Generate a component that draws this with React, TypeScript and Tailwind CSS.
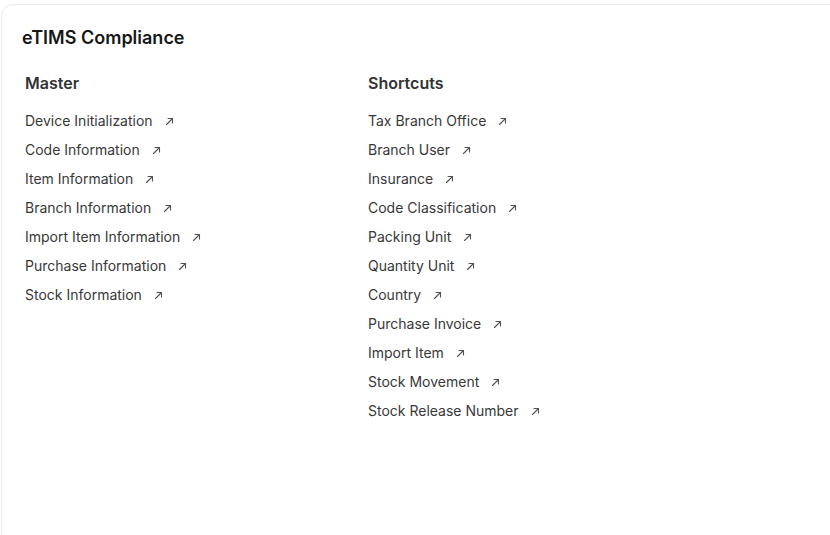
import React from 'react';

const master = [
  'Device Initialization',
  'Code Information',
  'Item Information',
  'Branch Information',
  'Import Item Information',
  'Purchase Information',
  'Stock Information',
];

const shortcuts = [
  'Tax Branch Office',
  'Branch User',
  'Insurance',
  'Code Classification',
  'Packing Unit',
  'Quantity Unit',
  'Country',
  'Purchase Invoice',
  'Import Item',
  'Stock Movement',
  'Stock Release Number',
];

function ArrowIcon() {
  return (
    <svg width="9" height="9" viewBox="0 0 9 9" fill="none" className="shrink-0">
      <path d="M1.5 7.5L7.5 1.5M3 1.5H7.5V6" stroke="#525252" strokeWidth="1.1" strokeLinecap="round" strokeLinejoin="round" />
    </svg>
  );
}

function Column({ title, items }: { title: string; items: string[] }) {
  return (
    <div className="w-[343px] shrink-0 pl-[3px]">
      <h3 className="text-[16px] leading-[24px] font-semibold text-[#333333]">{title}</h3>
      <div className="mt-[16px] flex flex-col gap-[9px]">
        {items.map(item => (
          <a key={item} className="flex items-center gap-[12px] text-[14px] leading-[20px] text-[#383838] cursor-pointer">
            <span>{item}</span>
            <ArrowIcon />
          </a>
        ))}
      </div>
    </div>
  );
}

export default function App() {
  return (
    <div className="w-[830px] h-[535px] overflow-hidden bg-white" style={{ fontFamily: 'Inter, "Noto Sans", sans-serif' }}>
      <div className="mt-[4px] ml-[1px] w-[900px] h-[600px] border border-[#ebebeb] rounded-xl bg-white px-[20px] pt-[21px]">
        <h2 className="text-[18px] leading-[24px] font-semibold text-[#171717]">eTIMS Compliance</h2>
        <div className="mt-[21px] flex">
          <Column title="Master" items={master} />
          <Column title="Shortcuts" items={shortcuts} />
        </div>
      </div>
    </div>
  );
}
